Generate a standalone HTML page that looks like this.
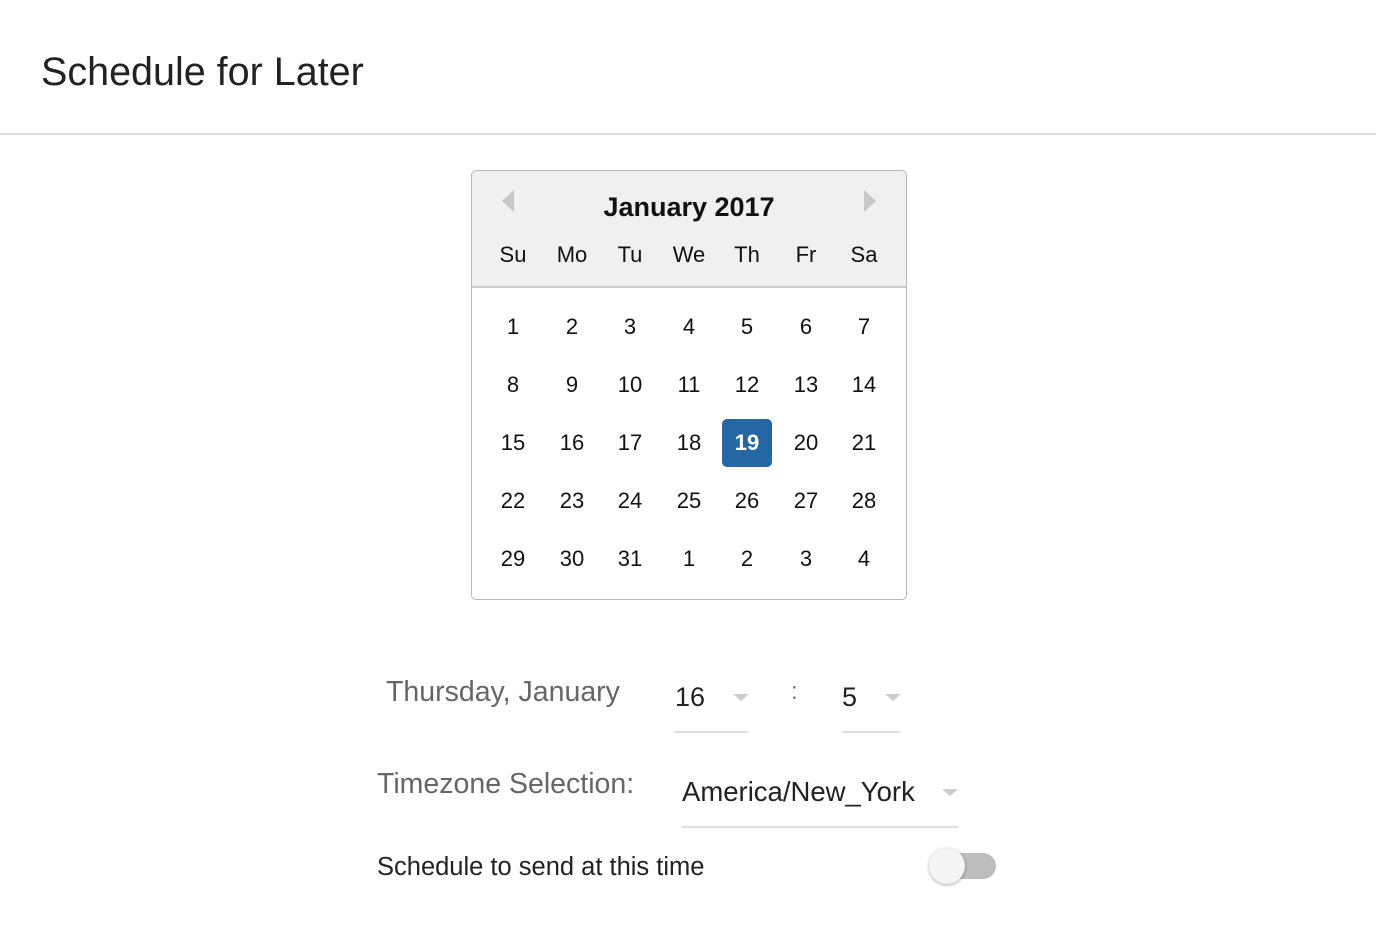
<html><head><style>
body{margin:0;width:1376px;height:948px;background:#fff;font-family:"Liberation Sans",sans-serif;position:relative;overflow:hidden}
.a{position:absolute}
.c{position:absolute;width:50px;text-align:center;font-size:22px;color:#111;line-height:48px}
.tri{position:absolute;width:0;height:0;border-left:8px solid transparent;border-right:8px solid transparent;border-top:7px solid #ccc}
</style></head><body>
<div class="a" style="left:41px;top:50px;font-size:39.5px;color:#222">Schedule for Later</div>
<div class="a" style="left:0;top:133px;width:1376px;height:2px;background:#e0e0e0"></div>
<div class="a" style="left:471px;top:170px;width:434px;height:428px;border:1px solid #b8b8b8;border-radius:5px;overflow:hidden">
<div class="a" style="left:0;top:0;width:434px;height:115px;background:#f0f0f0;border-bottom:2px solid #ccc"></div>
</div>
<div class="a" style="left:502px;top:190px;width:0;height:0;border-top:11px solid transparent;border-bottom:11px solid transparent;border-right:12px solid #c8c8c8"></div>
<div class="a" style="left:864px;top:190px;width:0;height:0;border-top:11px solid transparent;border-bottom:11px solid transparent;border-left:12px solid #c8c8c8"></div>
<div class="a" style="left:471px;top:192px;width:436px;text-align:center;font-size:27px;font-weight:bold;color:#111">January 2017</div>
<div class="a" style="left:722px;top:419px;width:50px;height:48px;background:#2467a3;border-radius:5px"></div>
<div id="g"></div>
<div class="a" style="left:386px;top:676px;font-size:28.5px;color:#666">Thursday, January</div>
<div class="a" style="left:675px;top:682px;font-size:27px;color:#222">16</div>
<div class="tri" style="left:733px;top:694px"></div>
<div class="a" style="left:674px;top:731px;width:74px;height:2px;background:#e0e0e0"></div>
<div class="a" style="left:791px;top:678px;font-size:24px;color:#777">:</div>
<div class="a" style="left:842px;top:682px;font-size:27px;color:#222">5</div>
<div class="tri" style="left:885px;top:694px"></div>
<div class="a" style="left:842px;top:731px;width:58px;height:2px;background:#e0e0e0"></div>
<div class="a" style="left:377px;top:768px;font-size:28.5px;color:#666">Timezone Selection:</div>
<div class="a" style="left:682px;top:776px;font-size:27.5px;color:#222">America/New_York</div>
<div class="tri" style="left:942px;top:789px"></div>
<div class="a" style="left:682px;top:826px;width:276px;height:2px;background:#e0e0e0"></div>
<div class="a" style="left:377px;top:853px;font-size:25.5px;color:#222">Schedule to send at this time</div>
<div class="a" style="left:940px;top:853px;width:56px;height:26px;border-radius:13px;background:#bdbdbd"></div>
<div class="a" style="left:929px;top:848px;width:36px;height:36px;border-radius:50%;background:#f5f5f5;box-shadow:0 1px 3px rgba(0,0,0,.35)"></div>
<script>
var xs=[513,572,630,689,747,806,864],h="",d=["Su","Mo","Tu","We","Th","Fr","Sa"];
d.forEach(function(t,i){h+='<div class="c" style="left:'+(xs[i]-25)+'px;top:231px">'+t+'</div>'});
var n=[];for(var i=1;i<=31;i++)n.push(i);n.push(1,2,3,4);
n.forEach(function(v,k){var r=Math.floor(k/7),c=k%7;var s=(k==18)?'color:#fff;font-weight:bold;':'';h+='<div class="c" style="'+s+'left:'+(xs[c]-25)+'px;top:'+(303+r*58)+'px">'+v+'</div>'});
document.getElementById("g").innerHTML=h;
</script>
</body></html>
